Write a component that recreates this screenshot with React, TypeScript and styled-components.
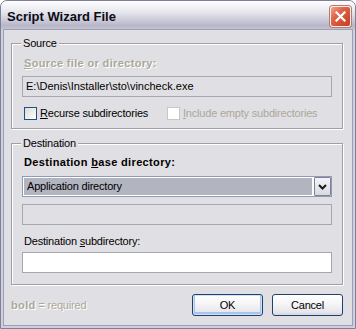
import React from "react";
import styled, { createGlobalStyle, css } from "styled-components";

const Global = createGlobalStyle`
  html, body { margin: 0; padding: 0; }
  body { font-family: "Liberation Sans", Arial, sans-serif; }
  * { box-sizing: border-box; }
`;

const Window = styled.div`
  width: 356px;
  height: 329px;
  border: 1px solid #7f8097;
  border-radius: 7px 7px 0 0;
  background: #cfd0dd;
  display: flex;
  flex-direction: column;
  overflow: hidden;
  font-family: "Liberation Sans", Arial, sans-serif;
  font-size: 11px;
  color: #000;
`;

const TitleBar = styled.div`
  height: 28px;
  flex: none;
  display: flex;
  align-items: center;
  justify-content: space-between;
  padding: 0 4px 0 6px;
  background: linear-gradient(
    180deg,
    #fdfdfe 0%,
    #f4f4f8 18%,
    #e2e2ea 45%,
    #c9c9d7 70%,
    #b6b6c8 88%,
    #c3c3d2 100%
  );
`;

const Title = styled.span`
  font-weight: bold;
  font-size: 13px;
  color: #0c0c14;
  padding-top: 2px;
`;

const CloseButton = styled.div`
  width: 21px;
  height: 21px;
  border: 1px solid #fbeeea;
  border-radius: 3px;
  background: linear-gradient(135deg, #f1a58f 0%, #e1664a 35%, #cf4a2f 75%, #c24128 100%);
  box-shadow: 0 0 0 1px #b37c70;
  display: flex;
  align-items: center;
  justify-content: center;
  margin-top: 2px;
`;

const Body = styled.div`
  flex: 1;
  margin: 0 2px 2px;
  border: 1px solid #9e9fb5;
  background: #e0dfe3;
  padding: 13px 9px 8px 7px;
  display: flex;
  flex-direction: column;
`;

const Group = styled.div<{ $pt: number; $pb: number; $mb: number }>`
  position: relative;
  border: 1px solid #a09fa6;
  box-shadow: inset 1px 1px 0 #ffffff, 1px 1px 0 #ffffff;
  padding: ${(p) => p.$pt}px 10px ${(p) => p.$pb}px;
  margin-bottom: ${(p) => p.$mb}px;
  display: flex;
  flex-direction: column;
`;

const Legend = styled.span`
  position: absolute;
  top: -7px;
  left: 9px;
  padding: 0 2px;
  background: #e0dfe3;
  line-height: 13px;
  letter-spacing: -0.2px;
`;

const Label = styled.div<{ $bold?: boolean; $disabled?: boolean; $mt?: number }>`
  line-height: 13px;
  margin-left: 2px;
  margin-top: ${(p) => p.$mt ?? 0}px;
  letter-spacing: -0.2px;
  ${(p) =>
    p.$bold &&
    css`
      font-weight: bold;
      letter-spacing: 0.35px;
    `}
  ${(p) =>
    p.$disabled &&
    css`
      color: #aca899;
      text-shadow: 1px 1px 0 #ffffff;
    `}
`;

const TextBox = styled.div<{ $bg: string; $mt: number }>`
  height: 21px;
  margin-top: ${(p) => p.$mt}px;
  border: 1px solid #a5a7b0;
  background: ${(p) => p.$bg};
  line-height: 19px;
  padding-left: 3px;
  white-space: nowrap;
`;

const Combo = styled.div<{ $mt: number }>`
  height: 21px;
  margin-top: ${(p) => p.$mt}px;
  border: 1px solid #8f9cb3;
  background: #ffffff;
  display: flex;
`;

const Selected = styled.div`
  flex: 1;
  margin: 1px 2px 1px 1px;
  background: #b2b4bf;
  line-height: 17px;
  padding-left: 3px;
  letter-spacing: -0.2px;
`;

const DropButton = styled.div`
  width: 17px;
  border: 1px solid #7e8095;
  border-radius: 1px;
  background: linear-gradient(180deg, #f4f4f8 0%, #e4e4ec 60%, #d8d8e2 100%);
  display: flex;
  align-items: center;
  justify-content: center;
`;

const CheckRow = styled.div`
  margin-top: 10px;
  margin-left: 2px;
  display: grid;
  grid-template-columns: 143px auto;
  height: 13px;
`;

const CheckItem = styled.div<{ $disabled?: boolean }>`
  display: flex;
  align-items: center;
  gap: 3px;
  line-height: 13px;
  letter-spacing: -0.2px;
  color: ${(p) => (p.$disabled ? "#aca899" : "#000")};
`;

const Box = styled.span<{ $disabled?: boolean }>`
  width: 13px;
  height: 13px;
  flex: none;
  ${(p) =>
    p.$disabled
      ? css`
          border: 1px solid #cac8bb;
          background: #ffffff;
        `
      : css`
          border: 1px solid #1c5180;
          background: linear-gradient(135deg, #dcdcd7 0%, #f0f0ee 60%, #ffffff 100%);
        `}
`;

const Footer = styled.div`
  display: flex;
  align-items: center;
  height: 22px;
`;

const Note = styled.div`
  flex: 1;
  color: #aca899;
  text-shadow: 1px 1px 0 #ffffff;
  letter-spacing: -0.2px;
  b {
    letter-spacing: 0.35px;
  }
`;

const Button = styled.div<{ $default?: boolean }>`
  width: 71px;
  height: 22px;
  margin-left: 9px;
  border: 1px solid #22416a;
  border-radius: 3px;
  background: linear-gradient(180deg, #ffffff 0%, #f5f5f7 45%, #e6e6ec 85%, #d6d6de 100%);
  display: flex;
  align-items: center;
  justify-content: center;
  letter-spacing: -0.2px;
  ${(p) =>
    p.$default &&
    css`
      box-shadow: inset 0 0 0 1px #cfe2f8, inset 0 -1px 0 2px #a9c4ec;
    `}
`;

const U = styled.u`
  text-decoration: underline;
  text-underline-offset: 1px;
`;

export default function App() {
  return (
    <>
      <Global />
      <Window>
        <TitleBar>
          <Title>Script Wizard File</Title>
          <CloseButton>
            <svg width="11" height="11" viewBox="0 0 11 11">
              <path d="M1.5 1.5 L9.5 9.5 M9.5 1.5 L1.5 9.5" stroke="#fff" strokeWidth="2.2" strokeLinecap="square" />
            </svg>
          </CloseButton>
        </TitleBar>
        <Body>
          <Group $pt={13} $pb={8} $mb={14}>
            <Legend>Source</Legend>
            <Label $bold $disabled>
              <U>S</U>ource file or directory:
            </Label>
            <TextBox $bg="#e0dfe3" $mt={6}>
              E:\Denis\Installer\sto\vincheck.exe
            </TextBox>
            <CheckRow>
              <CheckItem>
                <Box />
                <span>
                  <U>R</U>ecurse subdirectories
                </span>
              </CheckItem>
              <CheckItem $disabled>
                <Box $disabled />
                <span>
                  <U>I</U>nclude empty subdirectories
                </span>
              </CheckItem>
            </CheckRow>
          </Group>
          <Group $pt={12} $pb={11} $mb={9}>
            <Legend>Destination</Legend>
            <Label $bold>
              Destination <U>b</U>ase directory:
            </Label>
            <Combo $mt={7}>
              <Selected>Application directory</Selected>
              <DropButton>
                <svg width="9" height="6" viewBox="0 0 9 6">
                  <path d="M1 1 L4.5 4.5 L8 1" fill="none" stroke="#1a1a1a" strokeWidth="2" />
                </svg>
              </DropButton>
            </Combo>
            <TextBox $bg="#e0dfe3" $mt={7} />
            <Label $mt={10}>
              Destination <U>s</U>ubdirectory:
            </Label>
            <TextBox $bg="#ffffff" $mt={4} />
          </Group>
          <Footer>
            <Note>
              <b>bold</b> = required
            </Note>
            <Button $default>OK</Button>
            <Button>Cancel</Button>
          </Footer>
        </Body>
      </Window>
    </>
  );
}
